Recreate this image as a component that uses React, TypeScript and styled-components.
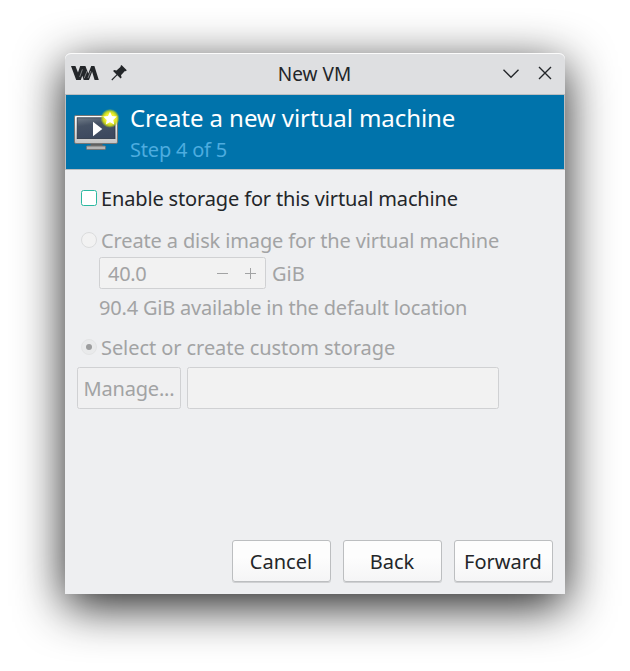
import React from 'react';
import styled, { createGlobalStyle, css } from 'styled-components';

const GlobalStyle = createGlobalStyle`
  * { box-sizing: border-box; }
  body {
    margin: 0;
    background: #fff;
    overflow: hidden;
    font-family: 'Noto Sans', sans-serif;
    font-size: 20px;
    color: #232629;
  }
`;

const Desktop = styled.main`
  width: 630px;
  height: 671px;
  padding: 53px 65px 77px;
`;

const Window = styled.section`
  display: flex;
  flex-direction: column;
  height: 541px;
  background: #eeeff1;
  border-radius: 6px 6px 0 0;
  box-shadow: 0 12px 48px rgba(0, 0, 0, 0.88);
`;

const TitleBar = styled.header`
  display: grid;
  grid-template-columns: 80px 1fr 80px;
  align-items: center;
  height: 42px;
  flex: none;
  background: #dedfe1;
  border-radius: 6px 6px 0 0;
  border-bottom: 1px solid #bcbec0;
  box-shadow: inset 0 1px 0 #fbfbfb;
`;

const TitleText = styled.h1`
  margin: 0;
  padding-right: 1px;
  font-size: 19px;
  font-weight: 400;
  line-height: 40px;
  text-align: center;
`;

const TitleIcons = styled.div`
  display: flex;
  align-items: center;
  height: 40px;
  svg { display: block; }
`;

const WindowIcons = styled(TitleIcons)`
  gap: 11px;
  margin-bottom: 1px;
  padding-left: 5px;
`;

const Banner = styled.div`
  display: flex;
  flex: none;
  height: 75px;
  padding: 0 0 0 8px;
  background: #0073ab;
  border: solid #bcbec0;
  border-width: 0 1px 1px;
  svg { display: block; margin-top: 13px; }
`;

const BannerText = styled.div`
  padding-left: 8px;
`;

const BannerTitle = styled.h2`
  margin: 6px 0 0;
  font-size: 24px;
  font-weight: 400;
  line-height: 33px;
  letter-spacing: -0.07px;
  color: #fff;
  white-space: nowrap;
`;

const BannerStep = styled.div`
  margin-top: 1px;
  font-size: 20px;
  line-height: 30px;
  letter-spacing: -0.2px;
  color: #4dacdf;
`;

const Content = styled.div`
  display: flex;
  flex-direction: column;
  flex: 1;
  padding: 14px 12px 12px;
`;

const Option = styled.label<{ $disabled?: boolean; $tracking: number }>`
  display: flex;
  align-items: center;
  gap: 4px;
  height: 30px;
  padding-left: 4px;
  line-height: 30px;
  white-space: nowrap;
  letter-spacing: ${p => p.$tracking}px;
  color: ${p => (p.$disabled ? '#a2a3a4' : '#232629')};
`;

const CheckBox = styled.span`
  width: 16px;
  height: 16px;
  margin-bottom: 2px;
  background: #fff;
  border: 1px solid #2bb8a0;
  border-radius: 2.5px;
`;

const Radio = styled.span<{ $checked?: boolean }>`
  display: flex;
  align-items: center;
  justify-content: center;
  width: 16px;
  height: 16px;
  margin-bottom: 2px;
  border: 1px solid ${p => (p.$checked ? '#e3e4e5' : '#dbdcdd')};
  border-radius: 50%;
  background: ${p => (p.$checked ? '#e9eaeb' : '#f2f2f2')};
  ${p => p.$checked && css`
    &::after {
      content: '';
      width: 6px;
      height: 6px;
      border-radius: 50%;
      background: #9c9d9e;
    }
  `}
`;

const DiskGroup = styled.div`
  margin-top: 12px;
  color: #a2a3a4;
`;

const SizeRow = styled.div`
  display: flex;
  align-items: flex-start;
  gap: 6px;
  margin: 1px 0 0 22px;
  height: 33px;
  line-height: 33px;
`;

const SpinBox = styled.div`
  display: flex;
  align-items: center;
  width: 167px;
  height: 32px;
  padding: 0 7px 0 8px;
  letter-spacing: -0.3px;
  background: #f2f2f2;
  border: 1px solid #d0d1d3;
  border-radius: 2.5px;
  svg { display: block; margin-left: auto; }
`;

const Note = styled.div`
  margin: 3px 0 0 22px;
  line-height: 30px;
  letter-spacing: -0.19px;
  white-space: nowrap;
`;

const CustomGroup = styled.div`
  margin-top: 10px;
`;

const StorageRow = styled.div`
  display: flex;
  gap: 6px;
  margin-top: 4px;
`;

const ManageButton = styled.button`
  width: 104px;
  height: 42px;
  padding: 0;
  font: inherit;
  letter-spacing: -0.2px;
  color: #a2a3a4;
  background: #f0f0f1;
  border: 1px solid #d0d1d3;
  border-radius: 2.5px;
`;

const PathField = styled.div`
  width: 312px;
  height: 42px;
  background: #f2f2f2;
  border: 1px solid #d0d1d3;
  border-radius: 2.5px;
`;

const Actions = styled.footer`
  display: flex;
  justify-content: flex-end;
  gap: 12px;
  margin-top: auto;
`;

const ActionButton = styled.button`
  width: 99px;
  height: 42px;
  padding: 0 1px 0 0;
  font: inherit;
  color: #232629;
  background: linear-gradient(#fdfdfd 40%, #f5f5f6);
  border: 1px solid #bcbec0;
  border-radius: 3px;
  box-shadow: 0 1px 0 #cfd0d2;
`;

const VmLogo = () => (
  <svg width="30" height="16" viewBox="0 0 30 16">
    <path d="M1 1h4.4l2.6 6.5L10.2 1h5.2l2.9 7.4L21.2 1h3.2l4.4 14h-4.2l-2.5-8.2L19 15h-5.3l-1.4-4.2L10.8 15H6.2z" fill="#232629" />
    <path d="M9.7 12 L12.4 4.4 M14.2 13.2 L17.2 5.8 M18 13 L20.8 6" stroke="#a5a7a9" strokeWidth=".7" />
  </svg>
);

const PinIcon = () => (
  <svg width="16" height="16" viewBox="0 0 16 16">
    <path d="M10.5 0 L15.8 5.2 L14.7 6.3 L13.9 6.1 L10 10.2 L10.6 12.5 L9.6 13.5 L6.3 10.3 L1.2 15.4 L.4 14.6 L5.5 9.5 L2.1 6.1 L3.1 5 L5.5 5.6 L9.7 1.8 L9.5 1Z" fill="#232629" />
  </svg>
);

const WindowControls = () => (
  <svg width="80" height="20" viewBox="0 0 80 20" fill="none" stroke="#232629" strokeWidth="1.35">
    <path d="M18.5 5.7 L26 13.2 L33.5 5.7" />
    <path d="M54 3 L66 15 M66 3 L54 15" />
  </svg>
);

const MonitorIcon = () => (
  <svg width="48" height="48" viewBox="0 0 48 48">
    <defs>
      <linearGradient id="frame" x1="0" y1="0" x2="0" y2="1">
        <stop offset="0" stopColor="#fff" />
        <stop offset="1" stopColor="#c4c4c4" />
      </linearGradient>
      <linearGradient id="screen" x1="0" y1="0" x2="0.3" y2="1">
        <stop offset="0" stopColor="#727d89" />
        <stop offset="0.4" stopColor="#465265" />
        <stop offset="1" stopColor="#3d495f" />
      </linearGradient>
      <radialGradient id="glow">
        <stop offset="0.5" stopColor="#f4f22d" />
        <stop offset="0.76" stopColor="#d4df17" stopOpacity="0.88" />
        <stop offset="1" stopColor="#a4c52b" stopOpacity="0.15" />
      </radialGradient>
    </defs>
    <path d="M16.5 35h12v4h-12z" fill="#606060" />
    <rect x="12.5" y="38" width="19" height="3.5" rx="0.8" fill="#b5b5b5" stroke="#777" />
    <rect x="0.5" y="7.5" width="43" height="28" rx="1.4" fill="url(#frame)" stroke="#777" />
    <rect x="3.2" y="9.8" width="37.8" height="20.8" fill="url(#screen)" stroke="#2d3747" strokeWidth=".8" />
    <path d="M19 13.7 L28.3 21 L19 28.3Z" fill="#fff" />
    <circle cx="36" cy="10.4" r="9.4" fill="url(#glow)" />
    <path d="M36 3.7 L38 8 L42.8 8.6 L39.3 11.9 L40.2 16.6 L36 14.3 L31.8 16.6 L32.7 11.9 L29.2 8.6 L34 8Z" fill="#fff" />
  </svg>
);

const StepperIcons = () => (
  <svg width="42" height="14" viewBox="0 0 42 14" stroke="#a2a3a4" strokeWidth="1">
    <path d="M1 7.5h11 M29 7.5h11 M34.5 2v11" />
  </svg>
);

export default function App() {
  return (
    <>
      <GlobalStyle />
      <Desktop>
        <Window>
          <TitleBar>
            <WindowIcons>
              <VmLogo />
              <PinIcon />
            </WindowIcons>
            <TitleText>New VM</TitleText>
            <TitleIcons><WindowControls /></TitleIcons>
          </TitleBar>
          <Banner>
            <MonitorIcon />
            <BannerText>
              <BannerTitle>Create a new virtual machine</BannerTitle>
              <BannerStep>Step 4 of 5</BannerStep>
            </BannerText>
          </Banner>
          <Content>
            <Option $tracking={-0.15}><CheckBox />Enable storage for this virtual machine</Option>
            <DiskGroup>
              <Option $disabled $tracking={-0.13}><Radio />Create a disk image for the virtual machine</Option>
              <SizeRow>
                <SpinBox>40.0<StepperIcons /></SpinBox>
                GiB
              </SizeRow>
              <Note>90.4 GiB available in the default location</Note>
            </DiskGroup>
            <CustomGroup>
              <Option $disabled $tracking={-0.07}><Radio $checked />Select or create custom storage</Option>
              <StorageRow>
                <ManageButton disabled>Manage...</ManageButton>
                <PathField />
              </StorageRow>
            </CustomGroup>
            <Actions>
              <ActionButton>Cancel</ActionButton>
              <ActionButton>Back</ActionButton>
              <ActionButton>Forward</ActionButton>
            </Actions>
          </Content>
        </Window>
      </Desktop>
    </>
  );
}
